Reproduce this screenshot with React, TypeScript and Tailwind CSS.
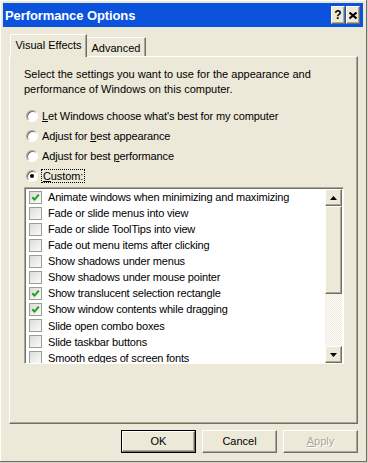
import type { ReactNode } from "react";

const EFFECTS: [string, boolean][] = [
  ["Animate windows when minimizing and maximizing", true],
  ["Fade or slide menus into view", false],
  ["Fade or slide ToolTips into view", false],
  ["Fade out menu items after clicking", false],
  ["Show shadows under menus", false],
  ["Show shadows under mouse pointer", false],
  ["Show translucent selection rectangle", true],
  ["Show window contents while dragging", true],
  ["Slide open combo boxes", false],
  ["Slide taskbar buttons", false],
  ["Smooth edges of screen fonts", false],
];

const raised =
  "border border-t-white border-l-white border-r-[#716f64] border-b-[#716f64] shadow-[inset_-1px_-1px_0_#aca899]";

function CaptionButton({ children }: { children: ReactNode }) {
  return (
    <div className={`flex h-[18px] w-[14px] items-center justify-center bg-[#ece9d8] ${raised}`}>
      {children}
    </div>
  );
}

function Radio({ label, checked }: { label: ReactNode; checked?: boolean }) {
  return (
    <div className="flex h-[20px] items-center pl-[2px]">
      <span className="flex h-[12px] w-[12px] items-center justify-center rounded-full border border-t-[#aca899] border-l-[#aca899] border-r-white border-b-white bg-white shadow-[inset_1px_1px_0_#716f64]">
        {checked && <span className="h-[4px] w-[4px] rounded-full bg-black" />}
      </span>
      <span className="ml-[4px] tracking-[-0.12px]">{label}</span>
    </div>
  );
}

function Check({ on }: { on: boolean }) {
  return (
    <span className="flex h-[13px] w-[13px] shrink-0 items-center justify-center border border-[#9a9b9b] bg-[linear-gradient(135deg,#dcdcd6,#fbfbf8)]">
      {on && (
        <svg width="9" height="9" viewBox="0 0 9 9">
          <path d="M1.2 4.2 L3.5 6.6 L7.8 1.6" fill="none" stroke="#21a121" strokeWidth="2" />
        </svg>
      )}
    </span>
  );
}

function Arrow({ up }: { up?: boolean }) {
  return (
    <div className={`flex h-[17px] w-[17px] items-center justify-center bg-[#ece9d8] ${raised}`}>
      <svg width="7" height="4" viewBox="0 0 7 4">
        <path d={up ? "M3.5 0 L7 4 L0 4 Z" : "M0 0 L7 0 L3.5 4 Z"} fill="#000" />
      </svg>
    </div>
  );
}

export default function App() {
  return (
    <div className="relative h-[463px] w-[368px] overflow-hidden bg-[#ece9d8] pl-[3px] pr-[5px] pt-[3px] font-['Liberation_Sans',Arial,sans-serif] text-[11px] text-black shadow-[inset_-1px_-1px_0_#d4d0c8,inset_-2px_-2px_0_#716f64,inset_1px_1px_0_#fff]">
      {/* title bar */}
      <div className="flex h-[24px] items-center justify-between bg-[#0b52dc] pl-[2px] pr-[3px]">
        <span className="text-[13px] font-bold leading-none tracking-[-0.1px] text-white">Performance Options</span>
        <div className="flex gap-[1px]">
          <CaptionButton>
            <span className="text-[12px] font-bold leading-none">?</span>
          </CaptionButton>
          <CaptionButton>
            <svg width="8" height="7" viewBox="0 0 8 7">
              <path d="M0.5 0.5 L7.5 6.5 M7.5 0.5 L0.5 6.5" stroke="#000" strokeWidth="2" />
            </svg>
          </CaptionButton>
        </div>
      </div>

      <div className="ml-[6px] mt-[7px] w-[349px]">
        {/* tabs */}
        <div className="flex items-end pl-[1px]">
          <div className="relative z-10 -mb-px flex h-[23px] w-[77px] items-center justify-center rounded-tl-[2px] border-l border-t border-l-white border-t-white border-r border-r-[#716f64] bg-[#ece9d8] pb-[1px] shadow-[inset_-1px_0_0_#aca899]">
            Visual Effects
          </div>
          <div className="flex h-[19px] w-[59px] items-center justify-center border-t border-t-white border-r border-r-[#716f64] pt-[2px] shadow-[inset_-1px_0_0_#aca899]">
            Advanced
          </div>
        </div>

        {/* panel */}
        <div className={`h-[368px] pl-[14px] pt-[10px] ${raised}`}>
          <p className="leading-[15px]">
            Select the settings you want to use for the appearance and
            <br />
            performance of Windows on this computer.
          </p>

          <div className="mt-[9px]">
            <Radio label={<><u>L</u>et Windows choose what's best for my computer</>} />
            <Radio label={<>Adjust for <u>b</u>est appearance</>} />
            <Radio label={<>Adjust for best <u>p</u>erformance</>} />
            <Radio
              checked
              label={
                <span className="px-[1px] outline outline-1 outline-dotted outline-black">
                  <u>C</u>ustom:
                </span>
              }
            />
          </div>

          {/* listbox */}
          <div className="mt-[1px] flex h-[177px] w-[320px] border border-t-[#aca899] border-l-[#aca899] border-r-white border-b-white bg-white shadow-[inset_1px_1px_0_#716f64]">
            <div className="flex-1 overflow-hidden pt-[1px]">
              {EFFECTS.map(([label, on]) => (
                <div key={label} className="flex h-[16.1px] items-center gap-[6px] pl-[4px] whitespace-nowrap">
                  <Check on={on} />
                  <span className="tracking-[-0.18px]">{label}</span>
                </div>
              ))}
            </div>
            <div className="mr-[1px] mt-[1px] flex w-[17px] flex-col">
              <Arrow up />
              <div className={`h-[88px] bg-[#ece9d8] ${raised}`} />
              <div className="flex-1 bg-[image:repeating-conic-gradient(#ece9d8_0_25%,#fff_0_50%)] bg-[length:2px_2px]" />
              <Arrow />
            </div>
          </div>
        </div>

        {/* buttons */}
        <div className="mt-[6px] flex justify-end gap-[6px]">
          <div className="h-[23px] w-[75px] border border-black">
            <div className={`flex h-full items-center justify-center bg-[#ece9d8] ${raised}`}>OK</div>
          </div>
          <div className={`flex h-[23px] w-[75px] items-center justify-center bg-[#ece9d8] ${raised}`}>Cancel</div>
          <div className={`flex h-[23px] w-[75px] items-center justify-center bg-[#ece9d8] text-[#aca899] [text-shadow:1px_1px_0_#fff] ${raised}`}>
            <span>
              <u>A</u>pply
            </span>
          </div>
        </div>
      </div>
    </div>
  );
}
